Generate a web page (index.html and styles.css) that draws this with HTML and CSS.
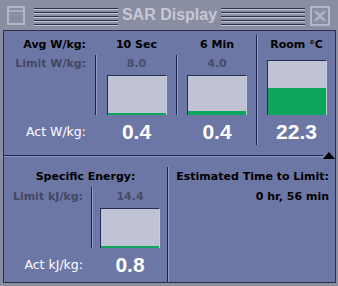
FILE: index.html
```html
<!DOCTYPE html>
<html lang="en">
<head>
    <meta charset="UTF-8">
    <meta name="viewport" content="width=device-width, initial-scale=1.0">
    <title>SAR Display</title>
    <link rel="stylesheet" href="styles.css">
</head>
<body>

<div class="window">
    <div class="titlebar">
        <svg class="win-icon" width="18" height="19" viewBox="0 0 18 19">
            <rect x="1" y="1" width="16" height="17" fill="none" stroke="#b3b6c6" stroke-width="2"/>
            <line x1="1" y1="5" x2="17" y2="5" stroke="#b3b6c6" stroke-width="1.5"/>
        </svg>
        <div class="grip"></div>
        <div class="title">SAR Display</div>
        <div class="grip"></div>
        <svg class="close" width="20" height="20" viewBox="0 0 20 20">
            <rect x="1" y="1" width="18" height="18" fill="none" stroke="#b3b6c6" stroke-width="2"/>
            <path d="M5 5 L15 15 M15 5 L5 15" stroke="#b3b6c6" stroke-width="2.4"/>
        </svg>
    </div>

    <div class="content">
        <div class="avg">
            <div class="lbl head-row">Avg W/kg:</div>
            <div class="lbl limit-row muted">Limit W/kg:</div>
            <div class="lbl act act-row">Act W/kg:</div>

            <div class="vline v1"></div>
            <div class="col-head c1">10 Sec</div>
            <div class="limit c1">8.0</div>
            <div class="bar c1"><div class="fill" style="height: 2px"></div></div>
            <div class="value c1">0.4</div>

            <div class="vline v2"></div>
            <div class="col-head c2">6 Min</div>
            <div class="limit c2">4.0</div>
            <div class="bar c2"><div class="fill" style="height: 4px"></div></div>
            <div class="value c2">0.4</div>

            <div class="vline v3"></div>
            <div class="col-head c3">Room °C</div>
            <div class="bar room c3"><div class="fill" style="height: 27px"></div></div>
            <div class="value c3">22.3</div>
        </div>

        <div class="hsep">
            <svg class="handle" width="12" height="7" viewBox="0 0 12 7">
                <polygon points="0,7 6,0 12,7" fill="#000"/>
            </svg>
        </div>

        <div class="lower">
            <div class="energy">
                <div class="energy-title">Specific Energy:</div>
                <div class="lbl e-limit muted">Limit kJ/kg:</div>
                <div class="vline ev"></div>
                <div class="limit e-col">14.4</div>
                <div class="bar e-col e-bar"><div class="fill" style="height: 2px"></div></div>
                <div class="lbl act e-act">Act kJ/kg:</div>
                <div class="value e-col e-val">0.8</div>
            </div>
            <div class="vsep"></div>
            <div class="eta">
                <div>Estimated Time to Limit:</div>
                <div>0 hr, 56 min</div>
            </div>
        </div>
    </div>
</div>

</body>
</html>
```

FILE: styles.css
```css
body {
    margin: 0;
    font-family: "DejaVu Sans", sans-serif;
    font-size: 11px;
    font-weight: bold;
    color: #000;
}

.window {
    width: 338px;
    height: 286px;
    box-sizing: border-box;
    background-color: #8a8ea2;
    padding: 0 2px 3px 3px;
}

.titlebar {
    height: 30px;
    display: flex;
    align-items: flex-start;
    padding: 0 6px 0 4px;
}

.win-icon {
    margin-top: 6px;
    flex: none;
}

.grip {
    flex: 1;
    height: 18px;
    margin-top: 8px;
    margin-left: 9px;
    background: repeating-linear-gradient(to bottom,
        #2e3246 0, #2e3246 1px,
        #c3c6d4 1px, #c3c6d4 2px,
        transparent 2px, transparent 4px);
}

.title + .grip {
    margin-left: 4px;
}

.title {
    margin-left: 4px;
    font-family: "Liberation Sans", Arial, sans-serif;
    font-size: 16px;
    line-height: 30px;
    color: #c6c8d6;
    white-space: nowrap;
}

.close {
    margin-top: 6px;
    margin-left: 5px;
    flex: none;
}

.content {
    height: 251px;
    width: 331px;
    border: 1px solid #2c3044;
    background-color: #6d77a6;
}

/* top half */
.avg {
    display: grid;
    grid-template-columns: 91px 2px 79px 2px 78px 2px 1fr;
    grid-template-rows: 20px 20px 40px 30px;
    padding-top: 4px;
    height: 124px;
    box-sizing: border-box;
}

.lbl {
    grid-column: 1;
    text-align: right;
    padding-right: 9px;
    white-space: nowrap;
}

.head-row { grid-row: 1; line-height: 20px; }
.limit-row { grid-row: 2; line-height: 17px; }
.act-row { grid-row: 4; }

.muted {
    color: #434862;
}

.act {
    color: #fff;
    font-weight: normal;
    font-size: 12.5px;
    line-height: 33px;
}

.vline {
    border-left: 1px solid #1d2350;
    border-right: 1px solid #939bc8;
    box-sizing: border-box;
}

.v1 { grid-column: 2; grid-row: 2 / 4; }
.v2 { grid-column: 4; grid-row: 2 / 4; }
.v3 { grid-column: 6; grid-row: 1 / 5; }

.c1 { grid-column: 3; }
.c2 { grid-column: 5; }
.c3 { grid-column: 7; }

.col-head {
    grid-row: 1;
    text-align: center;
    line-height: 20px;
}

.limit {
    grid-row: 2;
    text-align: center;
    line-height: 17px;
    color: #474c68;
}

.bar {
    grid-row: 3;
    justify-self: center;
    align-self: start;
    width: 60px;
    height: 40px;
    box-sizing: border-box;
    background-color: #c0c3d3;
    border-top: 1px solid #252c58;
    border-left: 1px solid #252c58;
    border-right: 1px solid #c9ccda;
    display: flex;
    flex-direction: column;
    justify-content: flex-end;
}

.bar.room {
    grid-row: 2 / 4;
    margin-top: 5px;
    height: 55px;
}

.fill {
    background-color: #0ea55c;
}

.value {
    grid-row: 4;
    text-align: center;
    font-family: "Liberation Sans", Arial, sans-serif;
    font-size: 21px;
    line-height: 34px;
    color: #fff;
}

/* separator */
.hsep {
    position: relative;
    height: 2px;
    margin-right: 12px;
    border-top: 1px solid #1d2350;
    background-color: #8a93c2;
    box-sizing: border-box;
}

.handle {
    position: absolute;
    right: -12px;
    top: -4px;
}

/* bottom half */
.lower {
    display: flex;
    height: 125px;
}

.energy {
    width: 163px;
    display: grid;
    grid-template-columns: 87px 2px 1fr;
    grid-template-rows: 20px 20px 41px 33px;
    padding-top: 10px;
    box-sizing: border-box;
}

.energy-title {
    grid-column: 1 / 4;
    grid-row: 1;
    text-align: center;
    line-height: 20px;
}

.e-limit {
    grid-row: 2;
    line-height: 20px;
    padding-right: 8px;
}

.ev { grid-column: 2; grid-row: 2 / 4; }

.e-col { grid-column: 3; }
.energy .limit { line-height: 20px; }

.e-bar {
    margin-top: 1px;
}

.e-act {
    grid-row: 4;
    padding-right: 8px;
}

.vsep {
    width: 2px;
    margin-top: 10px;
    border-left: 1px solid #1d2350;
    border-right: 1px solid #939bc8;
    box-sizing: border-box;
}

.eta {
    flex: 1;
    padding: 10px 6px 0 0;
    text-align: right;
    line-height: 20px;
    white-space: nowrap;
}
```
